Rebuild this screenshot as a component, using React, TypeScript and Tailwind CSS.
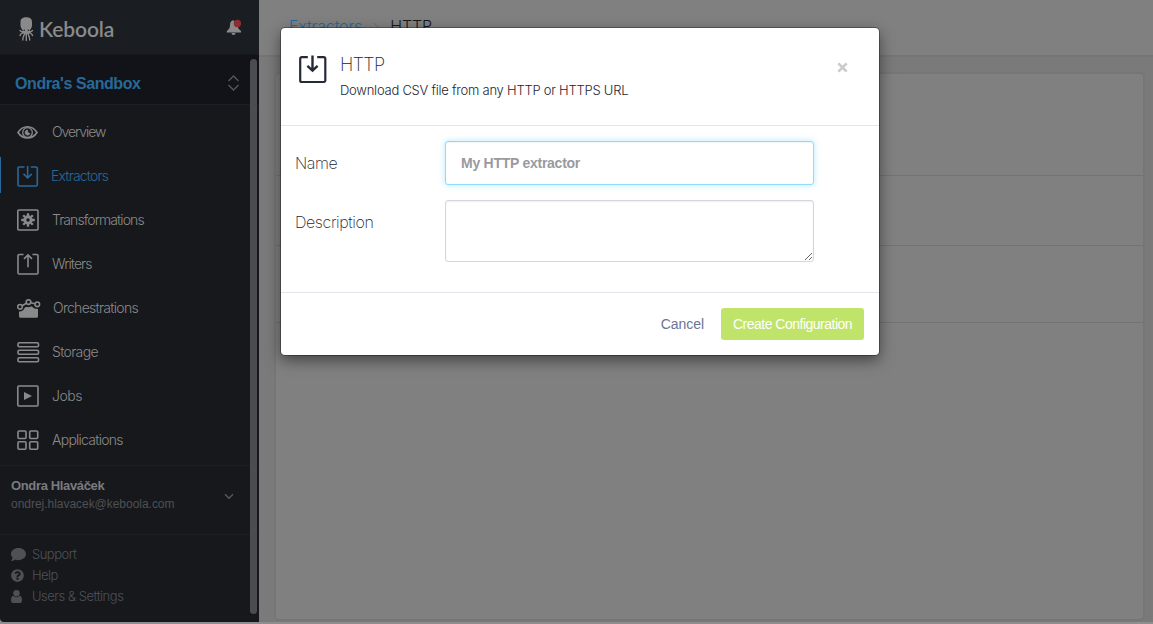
import React from 'react';
import { FaComment, FaQuestionCircle } from 'react-icons/fa';

const svgBase = { fill: 'none', stroke: 'currentColor', strokeWidth: 1.6 } as const;

function EyeIcon() {
  return (
    <svg width="22" height="22" viewBox="0 0 22 22" {...svgBase}>
      <path d="M1 11.500C3.500 7.500 7 5.700 10.500 5.700S17.500 7.500 20 11.500C17.500 15.300 14 17 10.500 17S3.500 15.300 1 11.500Z" />
      <circle cx="10.500" cy="11.500" r="4.800" strokeWidth="1.300" />
      <path d="M10.800 9A2.600 2.600 0 1 0 13 12.500A2.500 2.500 0 0 1 10.800 9Z" fill="currentColor" strokeWidth="0.600" />
    </svg>
  );
}

function ExtractIcon({ className = '', size = 22, weight = 1.6 }: { className?: string; size?: number; weight?: number }) {
  return (
    <svg className={className} width={size} height={size} viewBox="0 0 22 22" {...svgBase} strokeWidth={weight}>
      <path d="M7.500 2H2.300A1.300 1.300 0 0 0 1 3.300V19.700A1.300 1.300 0 0 0 2.300 21H19A1.300 1.300 0 0 0 20.300 19.700V3.300A1.300 1.300 0 0 0 19 2H13.800" />
      <path d="M10.650 1V12.800M6.500 8.800L10.650 12.800L14.800 8.800" />
    </svg>
  );
}

function ModalExtractIcon() {
  return (
    <svg className="mt-[2px]" width="29" height="29" viewBox="0 0 29 29" fill="none" stroke="#262a36" strokeWidth="2.200">
      <path d="M9.800 2.200H3.700A1.500 1.500 0 0 0 2.200 3.700V25.500A1.500 1.500 0 0 0 3.700 27H25.800A1.500 1.500 0 0 0 27.300 25.500V3.700A1.500 1.500 0 0 0 25.800 2.200H19.200" />
      <path d="M14.500 0.500V15.500M9.400 10.800L14.500 15.700L19.600 10.800" strokeWidth="2.400" />
    </svg>
  );
}

function GearIcon() {
  return (
    <svg width="22" height="22" viewBox="0 0 22 22" {...svgBase}>
      <rect x="0.800" y="1" width="20.200" height="20" rx="1" />
      <circle cx="11" cy="11" r="3.200" strokeWidth="3" />
      <g strokeWidth="2.300">
        <path d="M11 4.200V7M11 15V17.800M4.200 11H7M15 11H17.800M6.200 6.200L8 8M14 14L15.800 15.800M6.200 15.800L8 14M14 8L15.800 6.200" />
      </g>
    </svg>
  );
}

function WriteIcon() {
  return (
    <svg width="22" height="22" viewBox="0 0 22 22" {...svgBase}>
      <path d="M6.500 1.500H2.300A1.300 1.300 0 0 0 1 2.800V19.700A1.300 1.300 0 0 0 2.300 21H19.700A1.300 1.300 0 0 0 21 19.700V2.800A1.300 1.300 0 0 0 19.700 1.500H15.500" />
      <path d="M11 14.200V2M7 5.900L11 1.900L15 5.900" />
    </svg>
  );
}

function OrchestrationIcon() {
  return (
    <svg width="24" height="22" viewBox="0 0 24 22" {...svgBase}>
      <circle cx="3" cy="9.800" r="2.300" />
      <circle cx="11.500" cy="5.100" r="2.300" />
      <circle cx="20.300" cy="7.300" r="2.300" />
      <path d="M5.200 8.700L9.300 6.300M13.800 5.700L17.900 6.800" />
      <path d="M2 14.500C5.500 14.300 6.500 12.800 7.500 11.200C8.500 9.600 9.800 10.200 11.500 10.200S14.500 9 15.500 10S18 12 21 12V19.200A1.500 1.500 0 0 1 19.500 20.700H3.500A1.500 1.500 0 0 1 2 19.200Z" fill="currentColor" stroke="none" />
    </svg>
  );
}

function StorageIcon() {
  return (
    <svg width="23" height="22" viewBox="0 0 23 22" {...svgBase}>
      <rect x="1" y="1.800" width="20.500" height="4" rx="1.200" />
      <rect x="1" y="9.300" width="20.500" height="4" rx="1.200" />
      <rect x="1" y="16.700" width="20.500" height="4" rx="1.200" />
    </svg>
  );
}

function JobsIcon() {
  return (
    <svg width="22" height="22" viewBox="0 0 22 22" {...svgBase}>
      <rect x="0.800" y="1" width="20.200" height="20" rx="1" />
      <path d="M7 7L15 11L7 15Z" fill="currentColor" stroke="none" />
    </svg>
  );
}

function AppsIcon() {
  return (
    <svg width="22" height="22" viewBox="0 0 22 22" {...svgBase}>
      <rect x="1" y="2" width="8" height="7.500" rx="1" />
      <rect x="12.700" y="2" width="8" height="7.500" rx="1" />
      <rect x="1" y="12.700" width="8" height="7.500" rx="1" />
      <rect x="12.700" y="12.700" width="8" height="7.500" rx="1" />
    </svg>
  );
}

function OctopusLogo() {
  return (
    <svg width="16" height="25" viewBox="0 0 16 25" fill="#8a8a8a">
      <path d="M1.500 5C1.500 1.800 3.500 0.300 7.300 0.300S13 1.800 13 5V8.500C13 10.500 12 11.500 11 13H3.500C2.500 11.500 1.500 10.500 1.500 8.500Z" />
      <g fill="none" stroke="#8a8a8a" strokeWidth="1.400" strokeLinecap="round">
        <path d="M5 14C3.500 15 2 14.700 1 13.500M9.500 14C11 15 12.500 14.700 13.500 13.500M5 15C3.500 16.500 1.500 16 1 18.500M9.500 15C11 16.500 13 16 13.500 18.500M6 16C5.500 18 3.800 19 3.800 23M8.700 16C9.200 18 10.700 19 10.700 23M7.300 15V23.500" />
      </g>
      <path d="M3.500 12H11L10 17H4.500Z" />
      <circle cx="5.200" cy="13.300" r="0.700" fill="#1a1d21" />
      <circle cx="9.300" cy="13.300" r="0.700" fill="#1a1d21" />
    </svg>
  );
}

const navItems = [
  { label: 'Overview', icon: <EyeIcon />, text: 'pl-[1px] tracking-[-1.05px]' },
  { label: 'Extractors', icon: <ExtractIcon />, text: 'tracking-[-0.82px]', active: true },
  { label: 'Transformations', icon: <GearIcon />, text: 'pl-[1px] tracking-[-0.91px]' },
  { label: 'Writers', icon: <WriteIcon />, text: 'pl-[1px] tracking-[-0.92px]' },
  { label: 'Orchestrations', icon: <OrchestrationIcon />, text: 'pl-[2px] tracking-[-0.71px]' },
  { label: 'Storage', icon: <StorageIcon />, text: 'pl-[1px] tracking-[-0.66px]' },
  { label: 'Jobs', icon: <JobsIcon />, text: 'pl-[1px] tracking-[-0.5px]' },
  { label: 'Applications', icon: <AppsIcon />, text: 'pl-[1px] tracking-[-0.74px]' },
];

function Sidebar() {
  return (
    <aside className="relative flex h-[622px] w-[259px] shrink-0 flex-col overflow-hidden rounded-bl-[4px] bg-[#17181c] text-[#8a8a8a]">
      <div className="flex h-[55px] shrink-0 items-center border-b border-[#16181b] bg-[#1a1d21] pr-[17px] pl-[19px]">
        <div className="flex items-center gap-[4px] pt-[4px]">
          <OctopusLogo />
          <span className="font-[Lato] text-[21px] leading-6 font-semibold tracking-[-0.1px]">Keboola</span>
        </div>
        <svg className="ml-auto" width="16" height="17" viewBox="0 0 16 17">
          <path d="M7.500 1.200C5 1.600 4 3.500 4 6C4 9 3 10.500 0.800 12V13.500H15V12C12.800 10.500 11.800 9 11.500 6Z M5.500 14H9.500A2 2 0 0 1 5.500 14Z" fill="#8a8a8a" />
          <circle cx="11.400" cy="4.500" r="3.700" fill="#8e2d30" />
        </svg>
      </div>
      <div className="flex h-[50px] shrink-0 items-center justify-between border-b border-[#1e1f24] bg-[#121318] pt-[6px] pr-[19px] pl-[15px]">
        <span className="pt-[2px] text-[16px] font-bold tracking-[-0.42px] text-[#27699a]">Ondra's Sandbox</span>
        <svg width="13" height="18" viewBox="0 0 13 18" fill="none" stroke="#55565c" strokeWidth="1.400">
          <path d="M1.500 7L6.500 2L11.500 7M1.500 11L6.500 16L11.500 11" />
        </svg>
      </div>
      <nav className="flex h-[361px] shrink-0 flex-col border-b border-[#1e1f23] pt-[5px]">
        {navItems.map((item) => (
          <a
            key={item.label}
            className={
              item.active
                ? 'relative flex h-11 items-center pl-[17px] text-[#27699a] before:absolute before:top-[3px] before:left-0 before:h-9 before:w-px before:bg-[#27699a]'
                : 'flex h-11 items-center pl-[17px]'
            }
          >
            <span className="w-[34px] shrink-0">{item.icon}</span>
            <span className={`${item.text} pb-[2px] font-[Inter] text-[14px] font-light whitespace-nowrap`}>{item.label}</span>
          </a>
        ))}
      </nav>
      <div className="flex h-[69px] shrink-0 items-center justify-between border-b border-[#1e1f23] pr-[25px] pb-[11px] pl-[11px]">
        <div className="flex flex-col">
          <span className="text-[13px] leading-[18px] font-bold tracking-[-0.35px] text-[#7a7c7e]">Ondra Hlaváček</span>
          <span className="text-[12px] leading-[18px] tracking-[-0.03px] text-[#4d5155]">ondrej.hlavacek@keboola.com</span>
        </div>
        <svg className="mt-[3px]" width="10" height="7" viewBox="0 0 10 7" fill="none" stroke="#55585d" strokeWidth="1.400">
          <path d="M1 1.200L5 5.200L9 1.200" />
        </svg>
      </div>
      <div className="flex flex-col pt-[9px] pl-[11px] font-[Inter] text-[13px] font-light text-[#4d5155]">
        <div className="flex h-[21px] items-center">
          <FaComment className="w-[15px] text-[15px]" />
          <span className="pl-[6px] tracking-[-0.5px]">Support</span>
        </div>
        <div className="flex h-[21px] items-center">
          <FaQuestionCircle className="w-[13px] text-[13px]" />
          <span className="pl-[8px] tracking-[-0.6px]">Help</span>
        </div>
        <div className="flex h-[21px] items-center">
          <svg className="w-[11px]" width="11" height="13" viewBox="0 0 11 13" fill="currentColor">
            <circle cx="5.500" cy="3.200" r="3.200" />
            <path d="M2 5.800Q5.500 8.600 9 5.800Q11 6.500 11 10.500Q11 13 9 13H2Q0 13 0 10.500Q0 6.500 2 5.800Z" />
          </svg>
          <span className="pl-[10px] tracking-[-0.48px]">Users &amp; Settings</span>
        </div>
      </div>
      <div className="absolute top-[59px] right-[2px] h-[555px] w-[7px] rounded-full bg-[#4b4c50]" />
    </aside>
  );
}

function Page() {
  return (
    <main className="flex h-[622px] min-w-0 flex-1 flex-col bg-[#7a7a7a]">
      <header className="flex h-[57px] shrink-0 items-start border-b-2 border-[#757575] bg-[#808080] pt-[14px] pl-[30px] font-[Inter] text-[16px] leading-6 font-light">
        <span className="tracking-[-0.15px] text-[#27699a]">Extractors</span>
        <svg className="mt-[8px] ml-[11px]" width="6" height="10" viewBox="0 0 6 10" fill="none" stroke="#6a6a6a">
          <path d="M1 1L5 5L1 9" />
        </svg>
        <span className="ml-[11px] tracking-[-0.1px] text-[#16181d]">HTTP</span>
      </header>
      <section className="mt-[15px] mr-[8px] ml-[15px] flex h-[549px] flex-col rounded-[5px] border-2 border-[#767676] bg-[#808080]">
        <div className="h-[102px] border-b border-[#737373]" />
        <div className="h-[70px] border-b border-[#737373]" />
        <div className="h-[77px] border-b border-[#737373]" />
      </section>
    </main>
  );
}

function Modal() {
  return (
    <div
      role="dialog"
      className="absolute top-[28px] left-[281px] flex h-[327px] w-[598px] flex-col rounded-[4px] bg-white text-[#22252f] shadow-[0_0_0_1px_rgba(0,0,0,0.3),0_5px_15px_rgba(0,0,0,0.5)]"
    >
      <div className="flex h-[98px] shrink-0 items-start border-b border-[#e5e6e8] pt-[25px] pr-[31px] pl-[17px]">
        <ModalExtractIcon />
        <div className="flex flex-col pl-[13px] font-[Inter]">
          <h2 className="pt-px text-[18px] leading-[22px] font-extralight tracking-[-0.6px]">HTTP</h2>
          <p className="pt-[5px] text-[13px] leading-[18px] font-light tracking-[-0.24px]">Download CSV file from any HTTP or HTTPS URL</p>
        </div>
        <svg className="mt-[9px] ml-auto" width="11" height="11" viewBox="0 0 12 12" stroke="#cbcbcb" strokeWidth="3">
          <path d="M1.500 1.500L10.500 10.500M10.500 1.500L1.500 10.500" />
        </svg>
      </div>
      <div className="flex h-[167px] shrink-0 flex-col gap-[15px] border-b border-[#e4e4eb] pt-[15px] pl-[14px]">
        <div className="flex h-[44px] items-center">
          <label className="w-[150px] font-[Inter] text-[16px] font-extralight tracking-[-0.4px]">Name</label>
          <input
            className="h-[44px] w-[369px] rounded-[3px] border border-[#8edcfa] bg-white px-[15px] text-[14px] font-bold tracking-[-0.26px] shadow-[inset_0_1px_1px_rgba(0,0,0,0.05),0_0_6px_rgba(120,215,250,0.55)] outline-none placeholder:text-[#989a9f] placeholder:opacity-100"
            placeholder="My HTTP extractor"
          />
        </div>
        <div className="flex items-start">
          <label className="w-[150px] pt-[10px] font-[Inter] text-[16px] font-extralight tracking-[-0.4px]">Description</label>
          <textarea className="h-[62px] w-[369px] resize rounded-[3px] border border-[#d4d5dd] bg-white shadow-[inset_0_1px_2px_rgba(0,0,0,0.07)] outline-none" />
        </div>
      </div>
      <div className="flex flex-1 items-center justify-end gap-[17px] pr-[15px] text-[14px]">
        <button className="tracking-[-0.05px] text-[#6b7594]">Cancel</button>
        <button className="h-[32px] w-[143px] rounded-[3px] bg-[#c0e46a] tracking-[-0.5px] whitespace-nowrap text-white">Create Configuration</button>
      </div>
    </div>
  );
}

export default function App() {
  return (
    <div className="relative flex h-[624px] w-[1153px] flex-col overflow-hidden bg-[#8e8e8e] font-['Liberation_Sans',Arial,sans-serif]">
      <div className="flex">
        <Sidebar />
        <Page />
      </div>
      <Modal />
    </div>
  );
}
